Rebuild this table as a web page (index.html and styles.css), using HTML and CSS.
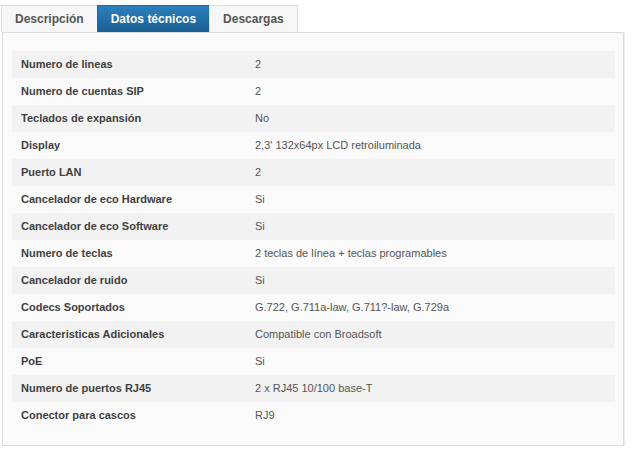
FILE: index.html
```html
<!DOCTYPE html>
<html lang="es">
<head>
<meta charset="utf-8">
<title>Datos técnicos</title>
<link rel="stylesheet" href="styles.css">
</head>
<body>
<div class="tabs-wrap">
  <ul class="tabs">
    <li class="tab">Descripción</li>
    <li class="tab active">Datos técnicos</li>
    <li class="tab">Descargas</li>
  </ul>
  <div class="panel">
    <table class="specs">
      <tbody>
        <tr><th>Numero de lineas</th><td>2</td></tr>
        <tr><th>Numero de cuentas SIP</th><td>2</td></tr>
        <tr><th>Teclados de expansión</th><td>No</td></tr>
        <tr><th>Display</th><td>2,3' 132x64px LCD retroiluminada</td></tr>
        <tr><th>Puerto LAN</th><td>2</td></tr>
        <tr><th>Cancelador de eco Hardware</th><td>Si</td></tr>
        <tr><th>Cancelador de eco Software</th><td>Si</td></tr>
        <tr><th>Numero de teclas</th><td>2 teclas de línea + teclas programables</td></tr>
        <tr><th>Cancelador de ruido</th><td>Si</td></tr>
        <tr><th>Codecs Soportados</th><td>G.722, G.711a-law, G.711?-law, G.729a</td></tr>
        <tr><th>Caracteristicas Adicionales</th><td>Compatible con Broadsoft</td></tr>
        <tr><th>PoE</th><td>Si</td></tr>
        <tr><th>Numero de puertos RJ45</th><td>2 x RJ45 10/100 base-T</td></tr>
        <tr><th>Conector para cascos</th><td>RJ9</td></tr>
      </tbody>
    </table>
  </div>
</div>
</body>
</html>
```
FILE: styles.css
```css
html, body {
  margin: 0;
  padding: 0;
  background: #ffffff;
}
body {
  font-family: "Liberation Sans", Arial, sans-serif;
  padding: 5px 0 0 1px;
}
.tabs-wrap {
  width: 624px;
}
.tabs {
  list-style: none;
  margin: 0;
  padding: 0;
  display: flex;
  position: relative;
  z-index: 1;
}
.tab {
  height: 26px;
  line-height: 27px;
  padding: 0 13px;
  font-size: 12px;
  font-weight: bold;
  color: #555555;
  background: #f7f7f7;
  border: 1px solid #dddddd;
  border-bottom: none;
  margin-right: -1px;
}
.tab.active {
  color: #ffffff;
  background: linear-gradient(#2c7fbd, #1a5f93);
  border-color: #1d6aa3;
}
.panel {
  margin-left: 1px;
  background: #fafafa;
  border: 1px solid #dcdcdc;
  box-shadow: 1px 1px 0 #ececec;
  padding: 18px 8px 16px 9px;
  width: 603px;
}
.specs {
  width: 603px;
  border-collapse: collapse;
  font-size: 11px;
}
.specs tr:nth-child(odd) {
  background: #f2f2f2;
}
.specs th, .specs td {
  height: 26px;
  padding: 0 9px 1px;
  text-align: left;
  vertical-align: middle;
}
.specs th {
  width: 216px;
  font-weight: bold;
  color: #3f3f3f;
}
.specs td {
  color: #555555;
}
```
